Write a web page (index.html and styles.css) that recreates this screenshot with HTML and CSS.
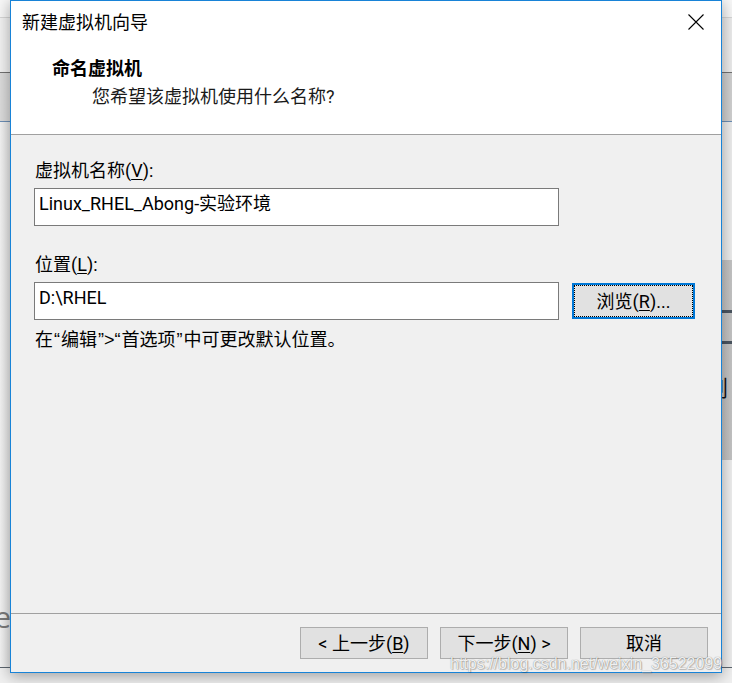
FILE: index.html
```html
<!DOCTYPE html>
<html lang="zh-CN">
<head>
    <meta charset="UTF-8">
    <title>新建虚拟机向导</title>
    <link rel="stylesheet" href="styles.css">
</head>
<body>
    <div class="desk">
        <div class="app-menu"></div>
        <div class="app-tabs"></div>
        <div class="app-toolbar"></div>
        <div class="app-main">
            <div class="app-side">
                <span class="app-word">Share</span>
            </div>
            <div class="app-center"></div>
            <div class="app-panel">
                <div class="panel-top"></div>
                <div class="panel-block">
                    <div class="panel-bar"></div>
                    <div class="panel-gap"></div>
                    <div class="panel-bar"></div>
                    <div class="panel-text">剧</div>
                </div>
                <div class="panel-rest"></div>
            </div>
        </div>
        <div class="app-status"></div>
    </div>

    <div class="dialog">
        <div class="titlebar">
            <span class="title">新建虚拟机向导</span>
            <svg class="close" width="16" height="16" viewBox="0 0 16 16">
                <path d="M0.5 0.5 L15.5 15.5 M15.5 0.5 L0.5 15.5" stroke="#000" stroke-width="1.1" fill="none"/>
            </svg>
        </div>
        <div class="header">
            <div class="heading">命名虚拟机</div>
            <div class="subheading">您希望该虚拟机使用什么名称?</div>
        </div>
        <div class="content">
            <div class="label">虚拟机名称(<u>V</u>):</div>
            <div class="field">Linux_RHEL_Abong-实验环境</div>
            <div class="label label-gap">位置(<u>L</u>):</div>
            <div class="row">
                <div class="field field-row">D:\RHEL</div>
                <button class="button browse" type="button">浏览(<u>R</u>)...</button>
            </div>
            <div class="hint">在<span class="q">“</span>编辑<span class="q">”&gt;“</span>首选项<span class="q">”</span>中可更改默认位置。</div>
        </div>
        <div class="footer">
            <button class="button" type="button">&lt; 上一步(<u>B</u>)</button>
            <button class="button" type="button">下一步(<u>N</u>) &gt;</button>
            <button class="button" type="button">取消</button>
        </div>
    </div>

    <div class="watermark">https://blog.csdn.net/weixin_36522099</div>
</body>
</html>
```

FILE: styles.css
```css
body {
    margin: 0;
    width: 732px;
    height: 683px;
    overflow: hidden;
    background: #f0f0f0;
    font-family: "Noto Sans CJK SC", sans-serif;
}

/* background application window */
.desk {
    height: 683px;
    display: flex;
    flex-direction: column;
}
.app-menu {
    height: 17px;
    background: #f7f7f7;
    border-bottom: 1px solid #d6d6d6;
}
.app-tabs {
    height: 54px;
    background: linear-gradient(to right, #f2f2f2, #ececec);
}
.app-toolbar {
    height: 48px;
    background: linear-gradient(to right, #dcdcdc, #d0d0d0);
    border-top: 1px solid #727272;
    border-bottom: 1px solid #6c8fb6;
}
.app-main {
    height: 545px;
    display: flex;
    border-bottom: 1px solid #5d6670;
}
.app-side {
    width: 11px;
    overflow: hidden;
    display: flex;
    justify-content: flex-end;
    background: linear-gradient(to right, #f4f4f4, #e6e6e6);
}
.app-word {
    margin-top: 480px;
    font-family: "Open Sans", sans-serif;
    font-size: 30px;
    color: #7b7b7b;
    white-space: nowrap;
    line-height: 30px;
}
.app-center {
    flex: 1;
}
.app-panel {
    width: 120px;
    display: flex;
    flex-direction: column;
}
.panel-top {
    height: 138px;
    background: #ededed;
}
.panel-block {
    height: 200px;
    background: linear-gradient(to right, #cfcfcf, #c4c4c4);
    padding-top: 50px;
    box-sizing: border-box;
}
.panel-bar {
    height: 3px;
    background: #4b5561;
}
.panel-gap {
    height: 28px;
}
.panel-text {
    margin: 29px 0 0 94px;
    font-size: 22px;
    line-height: 26px;
    color: #111;
    white-space: nowrap;
}
.panel-rest {
    flex: 1;
    background: #efefef;
}
.app-status {
    flex: 1;
    background: #f0f0f0;
}

/* wizard dialog */
.dialog {
    position: absolute;
    left: 10px;
    top: 0;
    width: 712px;
    height: 673px;
    box-sizing: border-box;
    border: 1px solid #1883d7;
    background: #f0f0f0;
    display: flex;
    flex-direction: column;
    box-shadow: 0 3px 14px rgba(0, 0, 0, 0.35);
    font-family: Roboto, "Noto Sans CJK SC", sans-serif;
    font-size: 18px;
    color: #000;
}
.titlebar {
    height: 42px;
    background: #fff;
    display: flex;
    align-items: center;
    justify-content: space-between;
    padding: 0 17px 0 11px;
}
.title {
    padding-top: 2px;
    line-height: 24px;
}
.close {
    display: block;
}
.header {
    height: 92px;
    box-sizing: border-box;
    background: #fff;
    border-bottom: 1px solid #a0a0a0;
    padding: 14px 0 0 41px;
}
.heading {
    font-weight: bold;
    line-height: 24px;
}
.subheading {
    margin: 4px 0 0 40px;
    line-height: 24px;
    color: #1a1a1a;
}
.content {
    flex: 1;
    padding: 24px 0 0 23px;
}
.label {
    padding-left: 1px;
    line-height: 24px;
}
.label u,
.button u {
    text-underline-offset: 2px;
}
.label-gap {
    margin-top: 27px;
}
.field {
    width: 525px;
    height: 38px;
    box-sizing: border-box;
    margin-top: 5px;
    padding: 3px 4px 0;
    border: 1px solid #7a7a7a;
    background: #fff;
    line-height: 24px;
    white-space: nowrap;
}
.row {
    margin-top: 5px;
    display: flex;
    align-items: center;
    gap: 13px;
}
.field-row {
    margin-top: 0;
}
.hint {
    margin-top: 8px;
    padding-left: 1px;
    line-height: 24px;
}
.hint .q {
    font-family: "Liberation Sans", sans-serif;
    padding: 0 1px;
}
.button {
    width: 128px;
    height: 32px;
    padding: 1px 0 0;
    border: 1px solid #adadad;
    background: #e1e1e1;
    font-family: inherit;
    font-size: 18px;
    line-height: 29px;
    color: #000;
}
.browse {
    width: 123px;
    height: 36px;
    border: 2px solid #0078d7;
    outline: 1px dotted #000;
    outline-offset: -3px;
}
.footer {
    height: 59px;
    box-sizing: border-box;
    border-top: 1px solid #a0a0a0;
    display: flex;
    justify-content: flex-end;
    align-items: flex-start;
    gap: 12px;
    padding: 13px 13px 0 0;
}

.watermark {
    position: absolute;
    left: 450px;
    top: 654px;
    font-family: "Liberation Sans", sans-serif;
    font-size: 16px;
    line-height: 20px;
    color: rgba(255, 255, 255, 0.9);
    text-shadow: 0 0 1px rgba(0, 0, 0, 0.5), 1px 1px 1px rgba(0, 0, 0, 0.2);
    white-space: nowrap;
}
```
